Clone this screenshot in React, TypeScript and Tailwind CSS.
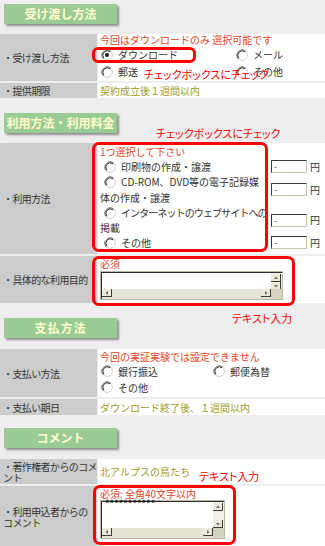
import React from "react"

// classic radio button
const Radio = ({ checked = false, className = "" }: { checked?: boolean; className?: string }) => (
  <svg width="12" height="12" viewBox="0 0 12 12" className={`shrink-0 ${className}`}>
    <circle cx="6" cy="6" r="5.4" fill="#fff" stroke="#d4d0c8" strokeWidth="1" />
    <path d="M2.2 9.8 A5.4 5.4 0 0 1 9.8 2.2" stroke="#808080" strokeWidth="1" fill="none" />
    <path d="M2.9 9.1 A4.4 4.4 0 0 1 9.1 2.9" stroke="#303030" strokeWidth="1" fill="none" />
    {checked && <circle cx="6" cy="6" r="2" fill="#111" />}
  </svg>
)

const Header = ({ title, className = "" }: { title: string; className?: string }) => (
  <div
    className={`ml-[4px] w-[113px] h-[20px] flex items-center justify-center bg-[#9acb94] text-[#ffffcc] text-[12px] font-bold shadow-[2px_2px_2px_rgba(0,0,0,0.4)] ${className}`}
  >
    {title}
  </div>
)

const Label = ({ children }: { children: React.ReactNode }) => (
  <div className="bg-[#cccccc] pl-[3px] flex items-center leading-[11px] text-[#333] whitespace-nowrap tracking-[-0.6px]">
    {children}
  </div>
)

const RadioItem = ({ label, checked = false, h = "h-[17px]" }: { label: string; checked?: boolean; h?: string }) => (
  <div className={`${h} flex items-center pl-[1px] gap-[5px] text-[#333]`}>
    <Radio checked={checked} />
    <span>{label}</span>
  </div>
)

const Arrow = ({ dir }: { dir: "up" | "down" | "left" | "right" }) => {
  const d = {
    up: "M1 4 L3 1.5 L5 4 Z",
    down: "M1 2 L3 4.5 L5 2 Z",
    left: "M4 1 L1.5 3 L4 5 Z",
    right: "M2 1 L4.5 3 L2 5 Z",
  }[dir]
  return (
    <svg width="6" height="6" viewBox="0 0 6 6">
      <path d={d} fill="#6b6b6b" />
    </svg>
  )
}

const ScrollBtn = ({ dir }: { dir: "up" | "down" | "left" | "right" }) => (
  <div className="w-[10px] h-[8px] shrink-0 flex items-center justify-center bg-[#ece9d8] border-r border-b border-[#3a3a3a]">
    <Arrow dir={dir} />
  </div>
)

// textarea drawn in the old windows look
const FakeTextarea = ({ w, h, children }: { w: string; h: string; children?: React.ReactNode }) => (
  <div className={`${w} ${h} flex flex-col border border-[#bdb8a4] bg-[#ece9d8]`}>
    <div className="flex flex-1 min-h-0">
      <div className="flex-1 bg-white border-t border-l border-[#2b2b2b] overflow-visible">{children}</div>
      <div className="w-[11px] flex flex-col justify-between bg-[#f3f1e8] border-t border-[#2b2b2b] pt-px">
        <ScrollBtn dir="up" />
        <ScrollBtn dir="down" />
      </div>
    </div>
    <div className="h-[10px] flex">
      <div className="flex-1 flex justify-between items-stretch bg-[#e6e2d4] border-l border-[#2b2b2b]">
        <ScrollBtn dir="left" />
        <ScrollBtn dir="right" />
      </div>
      <div className="w-[11px] bg-[#d6d2c2]" />
    </div>
  </div>
)

const YenInput = () => (
  <div className="flex items-center ml-[3px]">
    <div className="w-[36px] h-[13px] bg-white border border-[#c9c3a9] border-t-[#3a3a3a] border-l-[#3a3a3a] flex items-center pl-[2px] text-[9px] leading-none text-[#555]">
      -
    </div>
    <span className="ml-[3px] text-[#333]">円</span>
  </div>
)

const UseOption = ({ children }: { children: React.ReactNode }) => (
  <div className="flex items-center">
    <div className="w-[168px] text-[#333]">
      <Radio className="inline-block align-[-2px] ml-[4px] mr-[5px]" />
      {children}
    </div>
    <YenInput />
  </div>
)

export default function App() {
  return (
    <div className="relative w-[325px] h-[546px] overflow-hidden bg-[#eeeeee] font-['Noto_Sans_CJK_JP',sans-serif] text-[10px] text-[#333]">
      {/* 受け渡し方法 */}
      <Header title="受け渡し方法" className="mt-[4px]" />
      <div className="mt-[10px] grid grid-cols-[97px_1fr] gap-x-px gap-y-[2px]">
        <Label>・受け渡し方法</Label>
        <div className="bg-white h-[47px] pl-[2px]">
          <div className="leading-[12px] text-[#e8431f]">今回はダウンロードのみ 選択可能です</div>
          <div className="grid grid-cols-[135px_1fr]">
            <RadioItem label="ダウンロード" checked />
            <RadioItem label="メール" />
            <RadioItem label="郵送" />
            <RadioItem label="その他" />
          </div>
        </div>
        <Label>・提供期限</Label>
        <div className="bg-white h-[15px] pl-[2px] flex items-center text-[#9c9c1c]">契約成立後１週間以内</div>
      </div>

      {/* 利用方法・利用料金 */}
      <Header title="利用方法・利用料金" className="mt-[15px]" />
      <div className="mt-[10px] grid grid-cols-[97px_1fr] gap-x-px gap-y-[2px]">
        <Label>・利用方法</Label>
        <div className="bg-white h-[111px] pl-[2px] pt-px leading-[15.2px]">
          <div className="text-[#e8431f]">1つ選択して下さい</div>
          <UseOption>印刷物の作成・譲渡</UseOption>
          <UseOption>
            CD-ROM、DVD等の電子記録媒
            <br />
            体の作成・譲渡
          </UseOption>
          <UseOption>
            <span className="tracking-[-0.9px]">インターネットのウェブサイトへの</span>
            <br />
            掲載
          </UseOption>
          <UseOption>その他</UseOption>
        </div>
        <Label>・具体的な利用目的</Label>
        <div className="bg-white h-[47px] pl-[2px] pt-[2px]">
          <div className="leading-[12px] text-[#e8431f]">必須</div>
          <div className="mt-px">
            <FakeTextarea w="w-[183px]" h="h-[29px]" />
          </div>
        </div>
      </div>

      {/* 支払方法 */}
      <Header title="支払方法" className="mt-[15px] tracking-[1px]" />
      <div className="mt-[11px] grid grid-cols-[97px_1fr] gap-x-px gap-y-[2px]">
        <Label>・支払い方法</Label>
        <div className="bg-white h-[48px] pl-[2px] pt-[2px]">
          <div className="leading-[12px] text-[#e8431f]">今回の実証実験では設定できません</div>
          <div className="grid grid-cols-[112px_1fr]">
            <RadioItem label="銀行振込" h="h-[16px]" />
            <RadioItem label="郵便為替" h="h-[16px]" />
            <RadioItem label="その他" h="h-[16px]" />
          </div>
        </div>
        <Label>・支払い期日</Label>
        <div className="bg-white h-[16px] pl-[2px] flex items-center text-[#9c9c1c]">ダウンロード終了後、１週間以内</div>
      </div>

      {/* コメント */}
      <Header title="コメント" className="mt-[13px]" />
      <div className="mt-[11px] grid grid-cols-[97px_1fr] gap-x-px gap-y-[2px]">
        <Label>
          <span>
            ・著作権者からのコメ
            <br />
            ント
          </span>
        </Label>
        <div className="bg-white h-[25px] pl-[2px] flex items-center text-[#9c9c1c]">北アルプスの鳥たち</div>
        <Label>
          <span>
            ・利用申込者からの
            <br />
            コメント
          </span>
        </Label>
        <div className="bg-white h-[62px] pl-[2px] pt-[2px]">
          <div className="leading-[12px] text-[#e8431f]">必須: 全角40文字以内</div>
          <FakeTextarea w="w-[125px]" h="h-[39px]">
            <div className="-mt-[2px] pl-[3px] text-[9px] leading-[7px] font-bold text-[#111]">***********</div>
          </FakeTextarea>
        </div>
      </div>

      {/* red marks over the form */}
      <div className="absolute left-[92px] top-[47px] w-[104px] h-[16px] border-[3px] border-[#ff0000] rounded-[6px]" />
      <div className="absolute left-[92px] top-[142px] w-[176px] h-[110px] border-[3px] border-[#ff0000] rounded-[7px]" />
      <div className="absolute left-[92px] top-[256px] w-[203px] h-[50px] border-[3px] border-[#ff0000] rounded-[7px]" />
      <div className="absolute left-[93px] top-[485px] w-[143px] h-[60px] border-[3px] border-[#ff0000] rounded-[7px]" />

      <div className="absolute left-[144px] top-[68px] leading-[12px] text-[11px] text-[#ff0000] [font-feature-settings:'palt']">チェックボックスにチェック</div>
      <div className="absolute left-[156px] top-[127px] leading-[12px] text-[11px] text-[#ff0000] [font-feature-settings:'palt']">チェックボックスにチェック</div>
      <div className="absolute left-[232px] top-[312px] leading-[12px] text-[11px] text-[#ff0000] [font-feature-settings:'palt']">テキスト入力</div>
      <div className="absolute left-[199px] top-[470px] leading-[12px] text-[11px] text-[#ff0000] [font-feature-settings:'palt']">テキスト入力</div>
    </div>
  )
}
